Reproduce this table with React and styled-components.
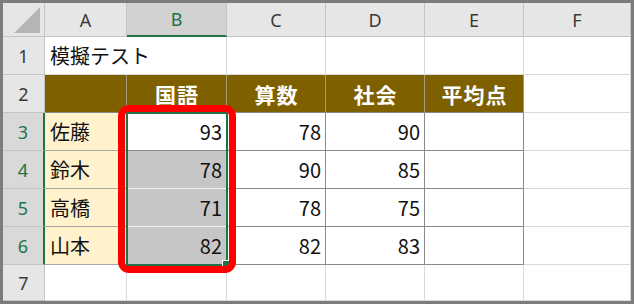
import React from "react";
import styled, { createGlobalStyle, css } from "styled-components";

const Global = createGlobalStyle`
  html, body { margin: 0; padding: 0; background: #ffffff; }
  body { font-family: "Noto Sans CJK JP", "Noto Sans", sans-serif; }
`;

const Sheet = styled.div`
  position: relative;
  box-sizing: border-box;
  width: 634px;
  height: 304px;
  border: 3px solid #7c7c7c;
  overflow: hidden;
  display: grid;
  grid-template-columns: 42px 82px 100px 99px 99px 99px 1fr;
  grid-template-rows: 34px repeat(6, 38px) 1fr;
  background: #ffffff;
`;

const Corner = styled.div`
  box-sizing: border-box;
  background: #e6e6e6;
  border-right: 1px solid #c4c4c4;
  border-bottom: 1px solid #c4c4c4;
  display: flex;
  justify-content: flex-end;
  align-items: flex-end;
  padding: 0 4px 3px 0;
`;

const ColHead = styled.div`
  box-sizing: border-box;
  background: ${(p) => (p.$sel ? "#d2d2d2" : "#e6e6e6")};
  color: ${(p) => (p.$sel ? "#217346" : "#3a3a3a")};
  border-right: 1px solid #c4c4c4;
  border-bottom: ${(p) => (p.$sel ? "2px solid #217346" : "1px solid #c4c4c4")};
  display: flex;
  align-items: center;
  justify-content: center;
  font-family: "Noto Sans", "Liberation Sans", sans-serif;
  font-size: 18px;
`;

const RowHead = styled.div`
  box-sizing: border-box;
  background: ${(p) => (p.$sel ? "#d9d9d9" : "#e6e6e6")};
  color: ${(p) => (p.$sel ? "#217346" : "#3a3a3a")};
  border-right: ${(p) => (p.$sel ? "2px solid #217346" : "1px solid #c4c4c4")};
  border-bottom: 1px solid #c4c4c4;
  display: flex;
  align-items: center;
  justify-content: center;
  font-family: "Noto Sans", "Liberation Sans", sans-serif;
  font-size: 18px;
`;

const kinds = {
  plain: css`
    background: #ffffff;
    border-right: 1px solid #d9d9d9;
    border-bottom: 1px solid #d9d9d9;
  `,
  title: css`
    background: #ffffff;
    border-right: 1px solid #d9d9d9;
    border-bottom: 1px solid #d9d9d9;
    grid-column: span 2;
  `,
  head: css`
    background: #7f6000;
    color: #ffffff;
    font-weight: 700;
    font-size: 21px;
    letter-spacing: 1px;
    justify-content: center;
    border-right: 1px solid #a89a78;
    border-bottom: 1px solid #8a8a8a;
  `,
  name: css`
    background: #fff2cc;
    border-right: 1px solid #a6a6a6;
    border-bottom: 1px solid #a6a6a6;
  `,
  active: css`
    background: #ffffff;
    justify-content: flex-end;
    border-right: 1px solid #8a8a8a;
    border-bottom: 1px solid #8a8a8a;
  `,
  selected: css`
    background: #c6c6c6;
    justify-content: flex-end;
    border-right: 1px solid #8a8a8a;
    border-bottom: 1px solid #eeeeee;
  `,
  num: css`
    background: #ffffff;
    justify-content: flex-end;
    border-right: 1px solid #8a8a8a;
    border-bottom: 1px solid #8a8a8a;
  `,
};

const Cell = styled.div`
  box-sizing: border-box;
  display: flex;
  align-items: center;
  padding: 0 4px 0 5px;
  font-size: 20px;
  color: #111111;
  white-space: nowrap;
  ${(p) => kinds[p.$kind || "plain"]}
`;

const SelectionBox = styled.div`
  position: absolute;
  left: 123px;
  top: 109px;
  width: 102px;
  height: 154px;
  box-sizing: border-box;
  border: 2px solid #217346;
  pointer-events: none;
`;

const FillHandle = styled.div`
  position: absolute;
  right: -3px;
  bottom: -3px;
  width: 6px;
  height: 6px;
  background: #217346;
  border: 1px solid #ffffff;
  border-right: none;
  border-bottom: none;
`;

const Highlight = styled.div`
  position: absolute;
  left: 115px;
  top: 102px;
  width: 118px;
  height: 168px;
  box-sizing: border-box;
  border: 7px solid #ff0000;
  border-radius: 11px;
  pointer-events: none;
`;

const cols = ["A", "B", "C", "D", "E", "F"];

const data = [
  ["佐藤", "93", "78", "90"],
  ["鈴木", "78", "90", "85"],
  ["高橋", "71", "78", "75"],
  ["山本", "82", "82", "83"],
];

export default function App() {
  return (
    <>
      <Global />
      <Sheet>
        <Corner>
          <svg width="26" height="26" viewBox="0 0 26 26">
            <polygon points="26,0 26,26 0,26" fill="#b5b5b5" />
          </svg>
        </Corner>
        {cols.map((c) => (
          <ColHead key={c} $sel={c === "B"}>
            {c}
          </ColHead>
        ))}

        <RowHead>1</RowHead>
        <Cell $kind="title">模擬テスト</Cell>
        <Cell />
        <Cell />
        <Cell />
        <Cell />

        <RowHead>2</RowHead>
        <Cell $kind="head" />
        <Cell $kind="head">国語</Cell>
        <Cell $kind="head">算数</Cell>
        <Cell $kind="head">社会</Cell>
        <Cell $kind="head">平均点</Cell>
        <Cell />

        {data.map((r, i) => (
          <React.Fragment key={r[0]}>
            <RowHead $sel>{i + 3}</RowHead>
            <Cell $kind="name">{r[0]}</Cell>
            <Cell $kind={i === 0 ? "active" : "selected"}>{r[1]}</Cell>
            <Cell $kind="num">{r[2]}</Cell>
            <Cell $kind="num">{r[3]}</Cell>
            <Cell $kind="num" />
            <Cell />
          </React.Fragment>
        ))}

        <RowHead>7</RowHead>
        <Cell />
        <Cell />
        <Cell />
        <Cell />
        <Cell />
        <Cell />

        <SelectionBox>
          <FillHandle />
        </SelectionBox>
        <Highlight />
      </Sheet>
    </>
  );
}
